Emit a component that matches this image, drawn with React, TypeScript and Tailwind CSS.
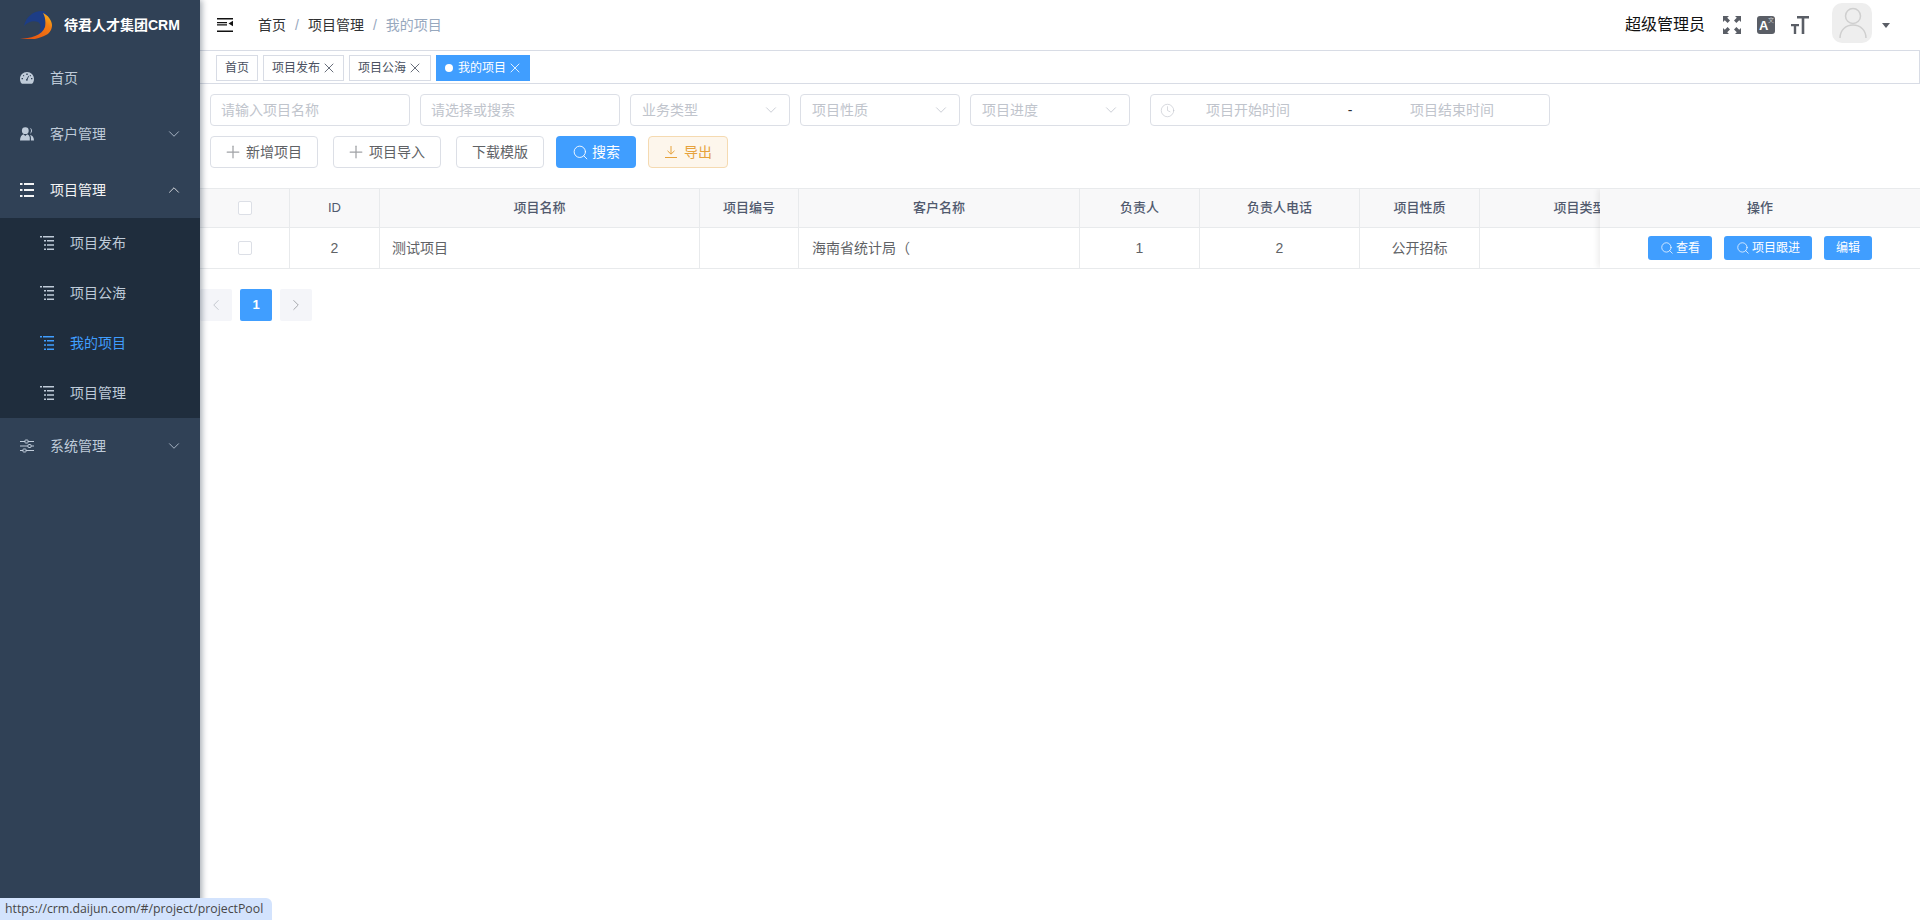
import React from "react";
import { ChevronDown, ChevronUp, ChevronLeft, ChevronRight, Plus, Search, Clock, X } from "lucide-react";

const font = "font-['Liberation_Sans','Noto_Sans_CJK_SC',sans-serif]";

const TreeIcon = ({ className }: { className?: string }) => (
  <svg viewBox="0 0 14 14" className={className} fill="currentColor">
    <path d="M0 0h2v1.500H0zM3 0h11v1.500H3zM4 4h2v1.500H4zM7 4h7v1.500H7zM4 8.300h2v1.500H4zM7 8.300h7v1.500H7zM4 12.500h2V14H4zM7 12.500h7V14H7z" />
  </svg>
);

const GaugeIcon = () => (
  <svg viewBox="0 0 14 12" className="h-[12px] w-[14px]" fill="currentColor">
    <path
      fillRule="evenodd"
      d="M7 0C3.100 0 0 3 0 6.900c0 1.600.5 3.100 1.400 4.400.2.300.4.400.7.400h9.800c.3 0 .5-.1.7-.4.9-1.300 1.400-2.800 1.400-4.400C14 3 10.900 0 7 0zM3.200 3h.9v1.200H3.200zM1.600 6h1.400v1.300H1.600zM6.300 1.500h1.400v1.500H6.300zM9.800 3h1v1.200h-1zM11 6h1.400v1.300H11zM7.800 7.800c0 .6-.3 1-.8 1s-1-.4-1-1c0-.4.200-.7.600-.9L8.500 3.800l.6.3-1.500 3.100c.1.200.2.400.2.600z"
    />
  </svg>
);

const PeopleIcon = () => (
  <svg viewBox="0 0 14 14" className="h-[14px] w-[14px]" fill="currentColor">
    <circle cx="5.300" cy="3.700" r="3.400" />
    <path d="M0 13.500c0-3.400 1.500-5.600 3.500-6.200L5.300 9l1.800-1.700c1.200.4 2.300 1.500 2.700 3.200v3H0z" />
    <path d="M9.500.8c1.600.3 2.500 1.500 2.500 3 0 1.400-.8 2.500-2 2.900.6-.8 1-1.900 1-3 0-1.100-.6-2.200-1.500-2.900zM10 7.700c2.200.5 4 2.300 4 5.800h-3.100v-3c-.1-1-.4-2-.9-2.800z" />
  </svg>
);

const ListIcon = () => (
  <svg viewBox="0 0 14 14" className="h-[14px] w-[14px]" fill="currentColor">
    <path d="M0 0h2.500v2H0zM4 0h10v2H4zM0 6h2.500v2H0zM4 6h10v2H4zM0 12h2.500v2H0zM4 12h10v2H4z" />
  </svg>
);

const SlidersIcon = () => (
  <svg viewBox="0 0 14 14" className="h-[14px] w-[14px]" fill="none" stroke="currentColor" strokeWidth="1">
    <path d="M0 2.500h5M8 2.500h6M0 7h8M11 7h3M0 11.500h3M6 11.500h8" />
    <rect x="5" y="1" width="3" height="3" rx="0.500" />
    <rect x="8" y="5.500" width="3" height="3" rx="0.500" />
    <rect x="3" y="10" width="3" height="3" rx="0.500" />
  </svg>
);

const Logo = () => (
  <svg viewBox="0 0 32 28" className="h-[28px] w-[32px]">
    <defs>
      <linearGradient id="logoOrange" x1="0" y1="1" x2="1" y2="0">
        <stop offset="0" stopColor="#e0480f" />
        <stop offset="0.700" stopColor="#f47c14" />
        <stop offset="1" stopColor="#f9c21c" />
      </linearGradient>
    </defs>
    <path d="M4 15C6 6 13 0 22 0c3 0 5 2 6 5 1 7-2 15-11 19 4-5 5-11 1-13-5-2-10 0-14 4z" fill="#1d3d86" />
    <path d="M0 28c10-1 22-3 25-12 1-5 0-11-2-14 5 2 9 8 9 12 0 4-2 8-6 10-7 4-18 6-26 4z" fill="url(#logoOrange)" />
  </svg>
);

const HamburgerIcon = () => (
  <svg viewBox="0 0 16 14" className="h-[14px] w-[16px]" fill="#111">
    <path d="M0 0h16v1.500H0zM0 4h10v1.200H0zM0 6.300h10v1.200H0zM0 12.500h16V14H0zM16 2.800v5.400L11.500 5.500z" />
  </svg>
);

const FullscreenIcon = () => (
  <svg viewBox="0 0 18 18" className="h-[18px] w-[18px]" fill="#5a5e66">
    <path d="M0 0h6L4.200 1.800 7 4.600 4.600 7 1.800 4.200 0 6zM18 0v6l-1.800-1.800L13.400 7 11 4.600l2.800-2.800L12 0zM0 18v-6l1.800 1.800L4.600 11 7 13.400l-2.800 2.800L6 18zM18 18h-6l1.800-1.800L11 13.400 13.400 11l2.800 2.800L18 12z" />
  </svg>
);

const TranslateIcon = () => (
  <div className="relative h-[18px] w-[18px] rounded-[3px] bg-[#5a5e66] text-white">
    <span className="absolute left-[2px] top-[3px] text-[13px] font-bold leading-[14px]">A</span>
    <span className="absolute right-[1px] top-[1px] text-[6px] leading-[7px] text-[#c8cacd]">文</span>
  </div>
);

const TextSizeIcon = () => (
  <svg viewBox="0 0 18 18" className="h-[18px] w-[18px]" fill="#5a5e66">
    <path d="M6 0h12v2.600h-4.700V18h-2.600V2.600H6zM0 8h8v2.200H5.200V18H2.800v-7.800H0z" />
  </svg>
);

const AvatarIcon = () => (
  <svg viewBox="0 0 40 40" className="h-[40px] w-[40px]" fill="none" stroke="#cfcfcf" strokeWidth="1.500">
    <circle cx="21" cy="13" r="7.500" />
    <path d="M8 35c0-8 6-13 13-13s13 5 13 13" />
  </svg>
);

const DownloadIcon = () => (
  <svg viewBox="0 0 12 12" className="h-[12px] w-[12px]" fill="none" stroke="currentColor" strokeWidth="1">
    <path d="M6 0v8M2.500 4.800 6 8.200l3.500-3.400M0 11.500h12" />
  </svg>
);

const Input = ({ text, width }: { text: string; width: string }) => (
  <div className={`flex h-[32px] items-center rounded-[4px] border border-[#dcdfe6] px-[10px] text-[14px] text-[#c0c4cc] ${width}`}>
    {text}
  </div>
);

const Select = ({ text }: { text: string }) => (
  <div className="flex h-[32px] w-[160px] items-center justify-between rounded-[4px] border border-[#dcdfe6] pl-[11px] pr-[9px] text-[14px] text-[#c0c4cc]">
    {text}
    <ChevronDown className="h-[18px] w-[18px]" strokeWidth={1.100} />
  </div>
);

const OutlineButton = ({ text, icon, width }: { text: string; icon?: boolean; width: string }) => (
  <button className={`flex h-[32px] items-center gap-[3px] rounded-[4px] border border-[#dcdfe6] bg-white text-[14px] text-[#606266] ${icon ? "justify-start pl-[12px]" : "justify-center"} ${width}`}>
    {icon && <Plus className="h-[20px] w-[20px] text-[#a0a2a6]" strokeWidth={1.500} />}
    {text}
  </button>
);

const NavItem = ({ icon, text, open, arrow, bright }: { icon: React.ReactNode; text: string; open?: boolean; arrow?: boolean; bright?: boolean }) => (
  <div className={`flex h-[56px] items-center pl-[20px] pr-[17px] text-[14px] ${bright ? "text-[#f4f4f5]" : "text-[#bfcbd9]"}`}>
    <span className="flex w-[14px] justify-center">{icon}</span>
    <span className="ml-[16px] flex-1">{text}</span>
    {arrow && (open ? <ChevronUp className="h-[18px] w-[18px]" strokeWidth={1.100} /> : <ChevronDown className="h-[18px] w-[18px]" strokeWidth={1.100} />)}
  </div>
);

const SubItem = ({ text, active }: { text: string; active?: boolean }) => (
  <div className={`flex h-[50px] items-center pl-[40px] text-[14px] ${active ? "text-[#409eff]" : "text-[#bfcbd9]"}`}>
    <TreeIcon className="h-[14px] w-[14px]" />
    <span className="ml-[16px]">{text}</span>
  </div>
);

const Tag = ({ text, width, close = true }: { text: string; width: string; close?: boolean }) => (
  <div className={`flex h-[26px] items-center gap-[1px] border border-[#d8dce5] bg-white pl-[8px] text-[12px] text-[#495060] ${width}`}>
    {text}
    {close && <X className="h-[16px] w-[16px]" strokeWidth={1.250} />}
  </div>
);

const Checkbox = () => <span className="block h-[14px] w-[14px] rounded-[2px] border border-[#dcdfe6] bg-white" />;

const columns = [
  { title: "", width: "w-[90px]" },
  { title: "ID", width: "w-[90px]" },
  { title: "项目名称", width: "w-[320px]" },
  { title: "项目编号", width: "w-[99px]" },
  { title: "客户名称", width: "w-[281px]" },
  { title: "负责人", width: "w-[120px]" },
  { title: "负责人电话", width: "w-[160px]" },
  { title: "项目性质", width: "w-[120px]" },
  { title: "项目类型", width: "w-[200px]" },
];

const rowCells: { content: React.ReactNode; align?: string }[] = [
  { content: <Checkbox /> },
  { content: "2" },
  { content: "测试项目", align: "justify-start pl-[12px]" },
  { content: "" },
  { content: "海南省统计局（", align: "justify-start pl-[13px]" },
  { content: "1" },
  { content: "2" },
  { content: "公开招标" },
  { content: "" },
];

const RowButton = ({ text, width, icon = true }: { text: string; width: string; icon?: boolean }) => (
  <button className={`flex h-[24px] items-center justify-center gap-[2px] rounded-[3px] bg-[#409eff] text-[12px] text-white ${width}`}>
    {icon && <Search className="h-[14px] w-[14px]" strokeWidth={1.250} />}
    {text}
  </button>
);

export default function App() {
  return (
    <div className={`relative flex h-[920px] w-[1920px] overflow-hidden bg-white ${font}`}>
      {/* sidebar */}
      <aside className="z-10 h-full w-[200px] shrink-0 bg-[#304156] shadow-[2px_0_6px_rgba(0,21,41,0.35)]">
        <div className="flex h-[50px] items-center pl-[20px]">
          <Logo />
          <span className="ml-[12px] text-[14px] font-bold text-white">待君人才集团CRM</span>
        </div>
        <NavItem icon={<GaugeIcon />} text="首页" />
        <NavItem icon={<PeopleIcon />} text="客户管理" arrow />
        <NavItem icon={<ListIcon />} text="项目管理" arrow open bright />
        <div className="bg-[#1f2d3d]">
          <SubItem text="项目发布" />
          <SubItem text="项目公海" />
          <SubItem text="我的项目" active />
          <SubItem text="项目管理" />
        </div>
        <NavItem icon={<SlidersIcon />} text="系统管理" arrow />
      </aside>

      {/* main */}
      <main className="min-w-0 flex-1">
        <header className="flex h-[50px] items-center pl-[17px]">
          <HamburgerIcon />
          <nav className="ml-[25px] flex items-center text-[14px] text-[#303133]">
            <span>首页</span>
            <span className="mx-[9px] text-[#97a8be]">/</span>
            <span>项目管理</span>
            <span className="mx-[9px] text-[#97a8be]">/</span>
            <span className="text-[#97a8be]">我的项目</span>
          </nav>
          <div className="ml-auto flex items-center">
            <span className="text-[16px] text-[#111]">超级管理员</span>
            <span className="ml-[18px]"><FullscreenIcon /></span>
            <span className="ml-[16px]"><TranslateIcon /></span>
            <span className="ml-[16px]"><TextSizeIcon /></span>
            <div className="mb-[4px] ml-[23px] h-[40px] w-[40px] rounded-[10px] bg-[#eeeeee]">
              <AvatarIcon />
            </div>
            <span className="ml-[10px] mr-[30px] block h-0 w-0 border-x-[4px] border-t-[5px] border-x-transparent border-t-[#5a5e66]" />
          </div>
        </header>

        <div className="flex h-[34px] items-start gap-[5px] border-y border-r border-[#d8dce5] pl-[16px] pt-[4px]">
          <Tag text="首页" width="w-[42px]" close={false} />
          <Tag text="项目发布" width="w-[81px]" />
          <Tag text="项目公海" width="w-[82px]" />
          <div className="flex h-[26px] w-[94px] items-center bg-[#409eff] pl-[9px] text-[12px] text-white">
            <span className="mr-[5px] h-[8px] w-[8px] rounded-full bg-white" />
            我的项目
            <X className="ml-[1px] h-[16px] w-[16px]" strokeWidth={1.250} />
          </div>
        </div>

        <div className="px-[10px] pt-[10px]">
          <div className="flex">
            <div className="flex gap-[10px]">
              <Input text="请输入项目名称" width="w-[200px]" />
              <Input text="请选择或搜索" width="w-[200px]" />
              <Select text="业务类型" />
              <Select text="项目性质" />
              <Select text="项目进度" />
            </div>
            <div className="ml-[20px] flex h-[32px] w-[400px] items-center rounded-[4px] border border-[#dcdfe6] pl-[9px] text-[14px] text-[#c0c4cc]">
              <Clock className="h-[15px] w-[15px]" strokeWidth={1} />
              <span className="w-[146px] text-center">项目开始时间</span>
              <span className="w-[58px] text-center text-[#303133]">-</span>
              <span className="w-[146px] text-center">项目结束时间</span>
            </div>
          </div>
          <div className="mt-[10px] flex">
            <OutlineButton text="新增项目" icon width="w-[108px]" />
            <div className="ml-[15px]"><OutlineButton text="项目导入" icon width="w-[108px]" /></div>
            <div className="ml-[15px]"><OutlineButton text="下载模版" width="w-[88px]" /></div>
            <button className="ml-[12px] flex h-[32px] w-[80px] items-center justify-center gap-[3px] rounded-[4px] bg-[#409eff] text-[14px] text-white">
              <Search className="h-[17px] w-[17px]" strokeWidth={1.250} />
              搜索
            </button>
            <button className="ml-[12px] flex h-[32px] w-[80px] items-center gap-[7px] rounded-[4px] border border-[#f5dab1] bg-[#fdf6ec] pl-[16px] text-[14px] text-[#e6a23c]">
              <DownloadIcon />
              导出
            </button>
          </div>
        </div>

        {/* table */}
        <div className="mt-[20px] flex overflow-hidden border-y border-[#e8eaec]">
          <div className="min-w-0 flex-1 overflow-hidden">
            <div className="flex h-[39px] w-max border-b border-[#e8eaec] bg-[#f8f8f9] text-[13px] font-medium text-[#515a6e]">
              {columns.map((col, i) => (
                <div key={i} className={`flex items-center justify-center border-r border-[#e8eaec] ${col.width}`}>
                  {i === 0 ? <Checkbox /> : col.title}
                </div>
              ))}
            </div>
            <div className="flex h-[40px] w-max text-[14px] text-[#606266]">
              {rowCells.map((cell, i) => (
                <div key={i} className={`flex items-center border-r border-[#e8eaec] ${columns[i].width} ${cell.align ?? "justify-center"}`}>
                  {cell.content}
                </div>
              ))}
            </div>
          </div>
          <div className="z-[1] w-[320px] shrink-0 bg-white shadow-[-2px_0_6px_rgba(0,0,0,0.08)]">
            <div className="flex h-[39px] items-center justify-center border-b border-[#e8eaec] bg-[#f8f8f9] text-[13px] font-medium text-[#515a6e]">
              操作
            </div>
            <div className="flex h-[40px] items-center pl-[48px]">
              <RowButton text="查看" width="w-[64px]" />
              <div className="ml-[12px]"><RowButton text="项目跟进" width="w-[88px]" /></div>
              <div className="ml-[12px]"><RowButton text="编辑" width="w-[48px]" icon={false} /></div>
            </div>
          </div>
        </div>

        {/* pagination */}
        <div className="mt-[20px] flex gap-[8px]">
          <span className="flex h-[32px] w-[32px] items-center justify-center rounded-[2px] bg-[#f4f5f9] text-[#c0c4cc]">
            <ChevronLeft className="h-[18px] w-[18px]" strokeWidth={1.250} />
          </span>
          <span className="flex h-[32px] w-[32px] items-center justify-center rounded-[2px] bg-[#409eff] text-[13px] font-bold text-white">1</span>
          <span className="flex h-[32px] w-[32px] items-center justify-center rounded-[2px] bg-[#f4f5f9] text-[#a0a2a6]">
            <ChevronRight className="h-[18px] w-[18px]" strokeWidth={1.250} />
          </span>
        </div>
      </main>

      {/* browser link preview */}
      <div className="absolute bottom-0 left-0 z-20 flex h-[22px] w-[272px] items-center rounded-tr-[6px] bg-[#d3e3fd] pl-[5px] font-['Open_Sans',sans-serif] text-[12.3px] text-[#474747]">
        https://crm.daijun.com/#/project/projectPool
      </div>
    </div>
  );
}
